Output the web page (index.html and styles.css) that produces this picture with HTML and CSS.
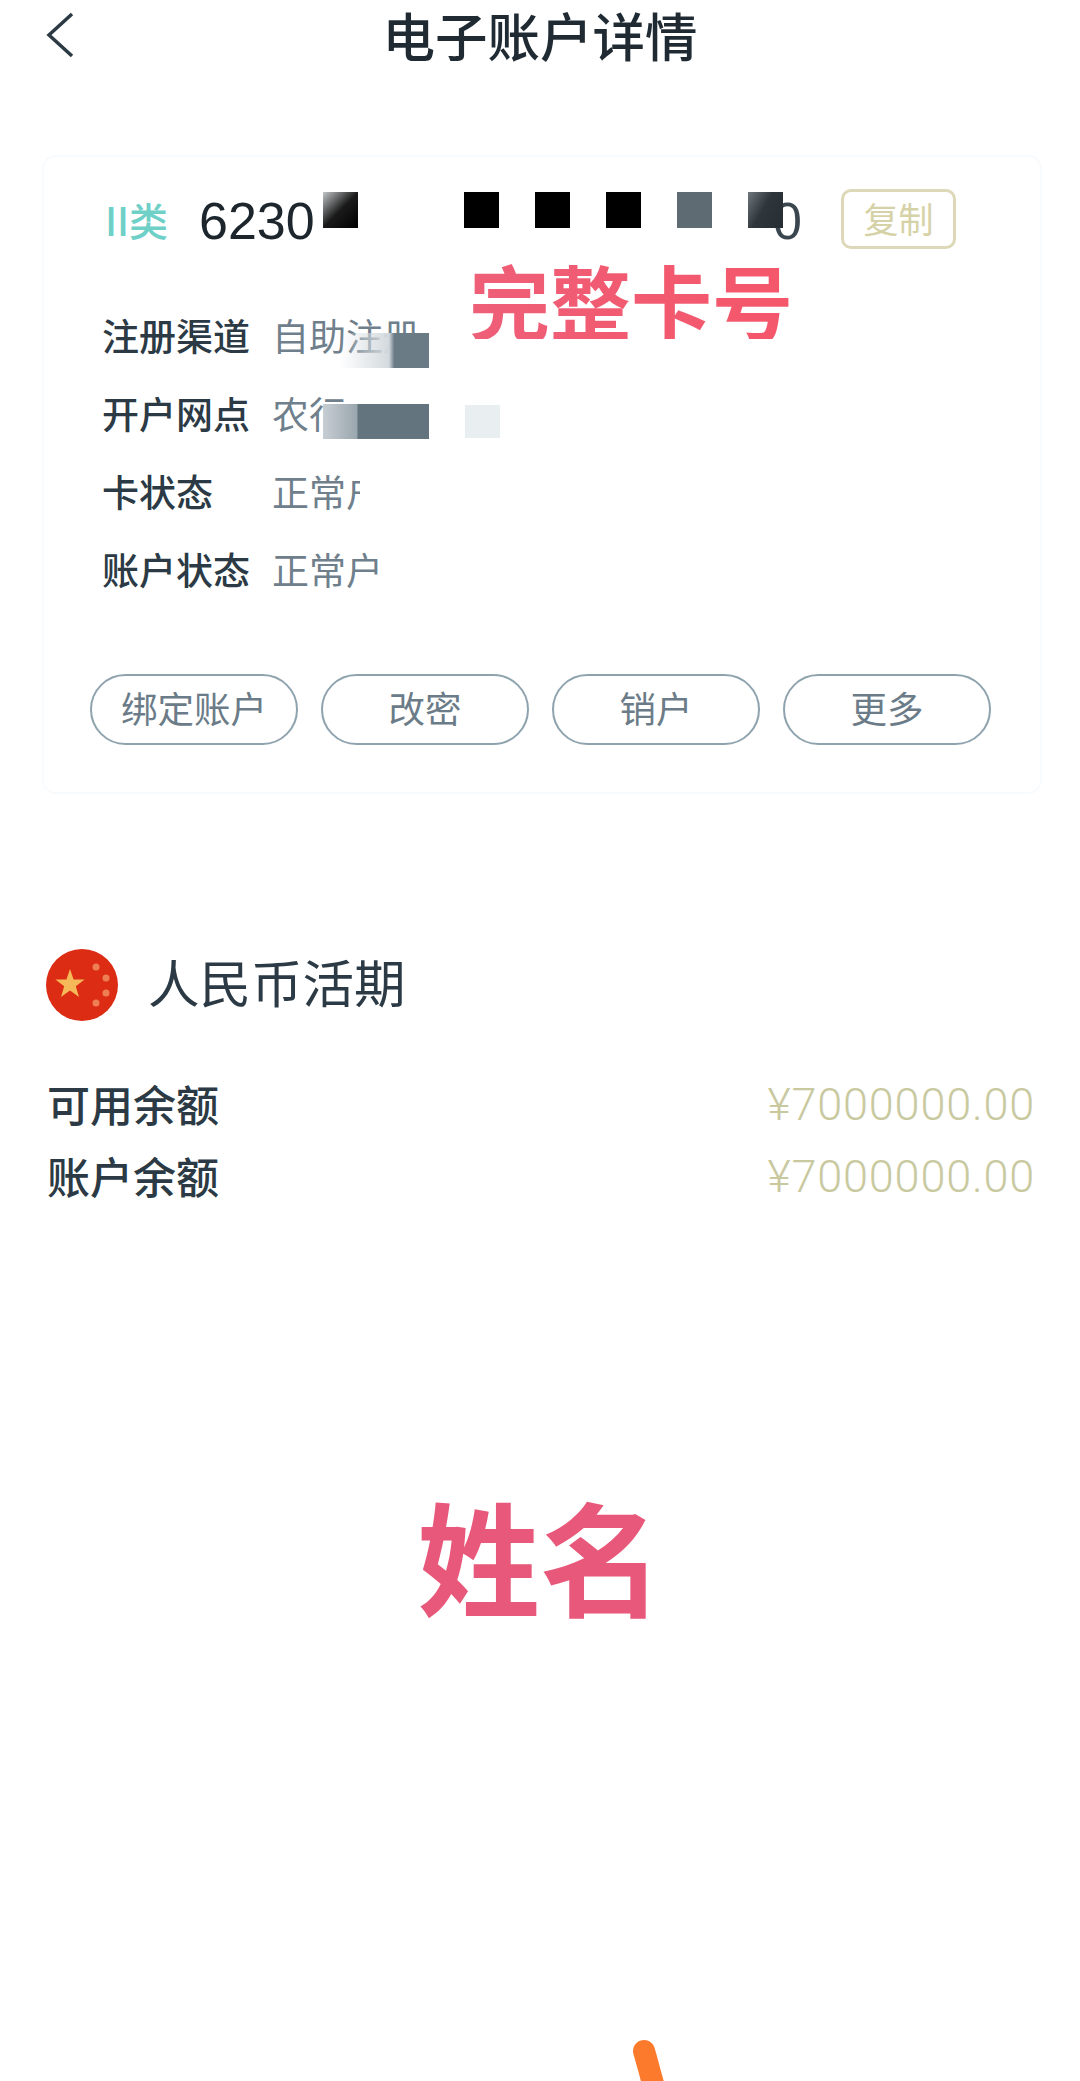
FILE: index.html
```html
<!DOCTYPE html>
<html lang="zh-CN">
<head>
  <meta charset="UTF-8">
  <title>电子账户详情</title>
  <link rel="stylesheet" href="styles.css">
</head>
<body>

  <!-- Top bar -->
  <header class="top-bar">
    <svg class="back-icon" width="32" height="46" viewBox="0 0 32 46">
      <path d="M28 2 L5 23 L28 44" fill="none" stroke="#2b3a44" stroke-width="3.5"/>
    </svg>
    <h1>电子账户详情</h1>
  </header>

  <!-- Account card -->
  <section class="card">
    <div class="number-row">
      <span class="card-type">II类</span>
      <span class="card-number">6230</span>
      <span class="mask mask-first"></span>
      <span class="mask mask-black mask-gap"></span>
      <span class="mask mask-black"></span>
      <span class="mask mask-black"></span>
      <span class="mask mask-grey"></span>
      <span class="mask mask-last"></span>
      <span class="card-tail">0</span>
      <button class="copy-btn">复制</button>
    </div>

    <div class="stamp">完整卡号</div>

    <div class="info-row">
      <span class="info-label">注册渠道</span>
      <span class="info-value">自助注册<i class="smear smear-channel"></i></span>
    </div>
    <div class="info-row">
      <span class="info-label">开户网点</span>
      <span class="info-value">农行<i class="smear smear-branch"></i><i class="smear smear-branch-light"></i></span>
    </div>
    <div class="info-row">
      <span class="info-label">卡状态</span>
      <span class="info-value">正常户<i class="smear smear-status"></i></span>
    </div>
    <div class="info-row">
      <span class="info-label">账户状态</span>
      <span class="info-value">正常户</span>
    </div>

    <div class="actions">
      <button class="action-btn">绑定账户</button>
      <button class="action-btn">改密</button>
      <button class="action-btn">销户</button>
      <button class="action-btn">更多</button>
    </div>
  </section>

  <!-- Balance -->
  <section class="balance">
    <div class="currency">
      <svg class="flag" width="72" height="72" viewBox="0 0 72 72">
        <circle cx="36" cy="36" r="36" fill="#dc2c14"/>
        <polygon points="24,20 27.6,30.6 38.6,30.6 29.8,37.2 33,48 24,41.6 15,48 18.2,37.2 9.4,30.6 20.4,30.6" fill="#f6b95a"/>
        <circle cx="50" cy="18" r="3.5" fill="#ee7f55"/>
        <circle cx="60" cy="29" r="3.5" fill="#ee7f55"/>
        <circle cx="60" cy="44" r="3.5" fill="#ee7f55"/>
        <circle cx="50" cy="54" r="3.5" fill="#ee7f55"/>
      </svg>
      <span class="currency-name">人民币活期</span>
    </div>
    <div class="balance-row">
      <span>可用余额</span>
      <span class="amount">¥7000000.00</span>
    </div>
    <div class="balance-row">
      <span>账户余额</span>
      <span class="amount">¥7000000.00</span>
    </div>
  </section>

  <div class="name-note">姓名</div>

  <!-- Hand-drawn mark at the bottom edge -->
  <svg class="scribble" width="60" height="50" viewBox="0 0 60 50">
    <path d="M12 20 C15 30 18 42 22 56" fill="none" stroke="#fb7a2c" stroke-width="22" stroke-linecap="round"/>
  </svg>

</body>
</html>
```

FILE: styles.css
```css
/* Base styling */
html, body {
  height: 2081px;
}

body {
  margin: 0;
  position: relative;
  overflow: hidden;
  background-color: #fff;
  color: #2b3a44;
  font-family: "Noto Sans CJK SC", "Liberation Sans", sans-serif;
}

button {
  font-family: inherit;
  background: none;
  padding: 0;
}

/* Top bar */
.top-bar {
  height: 70px;
  display: grid;
  grid-template-columns: 1fr auto 1fr;
  align-items: center;
  padding-left: 44px;
  padding-right: 44px;
}

.top-bar h1 {
  margin: -2px 0 0;
  font-size: 52.5px;
  line-height: 70px;
  font-weight: 500;
  color: #1f2a32;
}

/* Account card */
.card {
  position: relative;
  margin: 85px 38px 0 42px;
  padding: 32px 0 47px;
  border: 2px solid #f8fbfd;
  border-radius: 14px;
}

.number-row {
  height: 60px;
  display: flex;
  align-items: center;
  padding-left: 61px;
  padding-right: 84px;
}

.card-type {
  width: 94px;
  font-size: 39px;
  font-weight: 500;
  color: #6fd0c8;
}

.card-number {
  width: 124px;
  padding-top: 4px;
  font-family: "Liberation Sans", sans-serif;
  font-size: 52px;
  line-height: 50px;
  color: #1d262c;
}

.mask {
  position: relative;
  z-index: 1;
  width: 35px;
  height: 36px;
  margin-right: 36px;
  align-self: flex-start;
  margin-top: 3px;
}

.mask-gap {
  margin-left: 70px;
}

.mask-black {
  background-color: #000;
}

.mask-grey {
  background-color: #5f6b72;
}

.mask-first {
  background: linear-gradient(135deg, #c4c8ca 0%, #1a1a1a 50%, #000 100%);
}

.mask-last {
  margin-right: 0;
  background: linear-gradient(120deg, #70787d 0%, #2e363b 45%, #262d32 100%);
}

.card-tail {
  margin-left: -10px;
  padding-top: 4px;
  font-family: "Liberation Sans", sans-serif;
  font-size: 52px;
  line-height: 50px;
  color: #3a464d;
}

.copy-btn {
  margin-left: auto;
  width: 115px;
  height: 60px;
  padding-bottom: 4px;
  border: 3px solid #dcd8b8;
  border-radius: 10px;
  font-size: 35px;
  color: #d6d2a8;
}

/* Pink note over the card */
.stamp {
  position: absolute;
  left: 425px;
  top: 102px;
  font-size: 81px;
  line-height: 80px;
  font-weight: 700;
  white-space: nowrap;
  background: linear-gradient(90deg, #ee5f78, #f5566a);
  -webkit-background-clip: text;
  background-clip: text;
  color: transparent;
}

/* Info rows */
.info-row {
  height: 78px;
  display: flex;
  align-items: center;
  padding-left: 58px;
  font-size: 37px;
}

.number-row + .stamp + .info-row {
  margin-top: 47px;
}

.info-label {
  width: 170px;
  font-weight: 500;
  color: #2b3a44;
}

.info-value {
  position: relative;
  color: #6f808c;
}

/* Blurred-out parts of the values */
.smear {
  position: absolute;
}

.smear-channel {
  left: 68px;
  top: 25px;
  width: 89px;
  height: 35px;
  background: linear-gradient(90deg, rgba(200, 208, 213, 0) 0%, #d4dade 55%, #6b7b86 61%, #6b7b86 100%);
}

.smear-branch {
  left: 51px;
  top: 18px;
  width: 106px;
  height: 35px;
  background: linear-gradient(90deg, #c7ced3 0%, #9aa6ae 32%, #64747f 33%, #64747f 100%);
}

.smear-branch-light {
  left: 193px;
  top: 19px;
  width: 35px;
  height: 33px;
  background-color: #e9eef1;
}

.smear-status {
  left: 88px;
  top: 0;
  width: 36px;
  height: 54px;
  background-color: #fff;
}

/* Action buttons */
.actions {
  display: flex;
  gap: 23px;
  margin: 66px 0 0 46px;
}

.action-btn {
  width: 208px;
  height: 71px;
  padding-bottom: 4px;
  border: 2px solid #8fa3af;
  border-radius: 36px;
  font-size: 36.5px;
  color: #6b7c88;
}

/* Balance */
.balance {
  margin: 155px 45px 0 47px;
}

.currency {
  height: 72px;
  display: flex;
  align-items: center;
  gap: 30px;
  margin-left: -1px;
  font-size: 51.5px;
}

.currency-name {
  margin-top: -10px;
}

.balance-row {
  height: 72px;
  display: flex;
  justify-content: space-between;
  align-items: center;
  font-size: 43px;
  font-weight: 500;
}

.currency + .balance-row {
  margin-top: 46px;
}

.amount {
  padding-top: 3px;
  font-family: "Roboto", "Liberation Sans", sans-serif;
  font-size: 45px;
  font-weight: 300;
  letter-spacing: 0.8px;
  color: #c9c9a0;
}

/* Big pink note */
.name-note {
  margin-top: 277px;
  text-align: center;
  font-size: 123px;
  line-height: 130px;
  font-weight: 700;
  color: #e8587a;
}

.scribble {
  position: absolute;
  left: 632px;
  top: 2031px;
}
```
